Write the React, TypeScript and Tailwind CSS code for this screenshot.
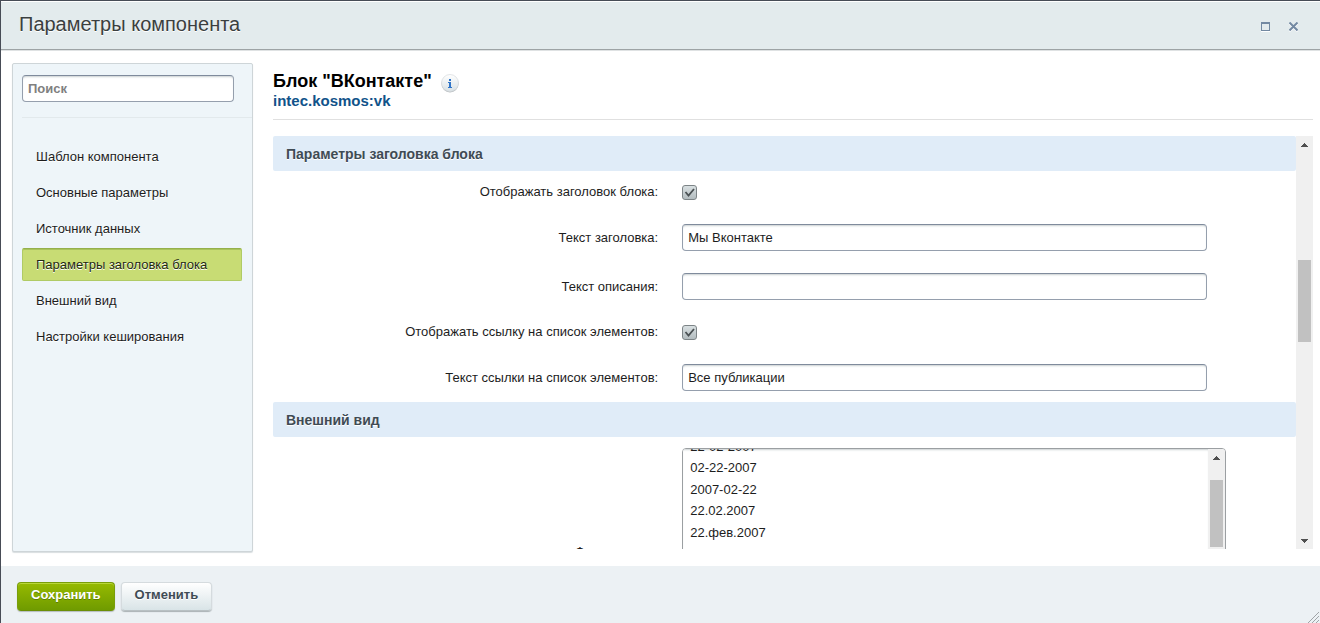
import React, { useEffect, useRef } from 'react';

const menu = [
  'Шаблон компонента',
  'Основные параметры',
  'Источник данных',
  'Параметры заголовка блока',
  'Внешний вид',
  'Настройки кеширования',
];

const dateFormats = [
  '22-02-2007',
  '02-22-2007',
  '2007-02-22',
  '22.02.2007',
  '22.фев.2007',
  '22 февраля 2007',
  'Февраль 22, 2007',
  '22/02/2007',
  '02/22/2007',
  '2007/02/22',
  '22 фев 2007',
  'Фев 22, 2007',
];

const inputClass =
  'h-[27px] rounded-[4px] border border-[#959fad] border-t-[#7f8b9c] bg-white text-[13px] text-[#1d1d1d] shadow-[inset_0_2px_2px_-1px_rgba(180,188,191,0.7)] outline-none';

const Arrow: React.FC<{ down?: boolean }> = ({ down }) => (
  <div className="flex h-[17px] shrink-0 items-center justify-center">
    <svg width="7" height="4" viewBox="0 0 7 4" fill="#505050" shapeRendering="crispEdges">
      {down ? (
        <path d="M0 0h7v1H6v1H5v1H4v1H3V3H2V2H1V1H0z" />
      ) : (
        <path d="M0 4h7V3H6V2H5V1H4V0H3v1H2v1H1v1H0z" />
      )}
    </svg>
  </div>
);

const SectionTitle: React.FC<{ children: React.ReactNode }> = ({ children }) => (
  <h2 className="flex h-[35px] items-center rounded-[2px] bg-[#e0ecf8] px-[13px] pt-[2px] text-[14px] font-bold text-[#3f4b54] [text-shadow:0_1px_#fff]">
    {children}
  </h2>
);

const TextRow: React.FC<{ id: string; label: string; value: string }> = ({ id, label, value }) => (
  <div className="flex h-[49px] items-center">
    <label htmlFor={id} className="w-2/5 shrink-0 pr-6 text-right">{label}</label>
    <input id={id} type="text" defaultValue={value} className={`${inputClass} w-[525px] max-w-full px-[5px]`} />
  </div>
);

const CheckRow: React.FC<{ id: string; label: string }> = ({ id, label }) => (
  <div className="flex h-[42px] items-center">
    <label htmlFor={id} className="w-2/5 shrink-0 pr-6 text-right">{label}</label>
    <span className="grid">
      <input
        id={id}
        type="checkbox"
        defaultChecked
        className="peer col-start-1 row-start-1 size-[15px] appearance-none rounded-[3px] border border-[#7d8487] bg-linear-to-b from-[#d9e0e2] to-[#b3bcbf]"
      />
      <svg
        className="pointer-events-none invisible col-start-1 row-start-1 peer-checked:visible"
        width="15"
        height="15"
        viewBox="0 0 15 15"
        fill="none"
        stroke="#4a5053"
      >
        <path d="M3.5 7l3 3.5L12 4" strokeWidth="1.8" />
      </svg>
    </span>
  </div>
);

const DateFormatRow: React.FC = () => {
  const list = useRef<HTMLSelectElement>(null);

  useEffect(() => {
    if (list.current) list.current.scrollTop = 10;
  }, []);

  return (
    <div className="flex items-center py-[11px]">
      <label htmlFor="date-format" className="w-2/5 shrink-0 pr-6 text-right">Формат даты:</label>
      <div className="flex h-[208px] w-[544px] max-w-full overflow-hidden rounded-[4px] border border-[#9b9fa2] bg-white">
        <select
          id="date-format"
          ref={list}
          size={9}
          className="h-full min-w-0 flex-1 appearance-none overflow-y-scroll bg-white px-[5px] text-[13px] text-[#1d1d1d] shadow-[inset_0_2px_2px_-1px_rgba(180,188,191,0.7)] outline-none [scrollbar-width:none]"
        >
          {dateFormats.map((format) => (
            <option key={format} className="px-[2px] py-0 odd:h-[21px] even:h-[22px]">{format}</option>
          ))}
        </select>
        <div className="flex w-[17px] shrink-0 flex-col bg-[#f0f0f0]">
          <Arrow />
          <div className="mx-[2px] mt-[14px] h-[67px] bg-[#c1c1c1]" />
        </div>
      </div>
    </div>
  );
};

const App: React.FC = () => {
  return (
    <div className="flex h-screen flex-col border-t border-l border-[#474c56] bg-white font-['Liberation_Sans',Arial,sans-serif] text-[13px] text-[#1d1d1d]">
      <header className="flex h-[49px] shrink-0 items-center justify-between border-t border-b border-t-white border-b-[#9da3a5] bg-[#e3ebed] pr-[22px] pl-[18px] shadow-[0_1px_#dfe2e3]">
        <h1 className="pb-[4px] text-[20px] leading-[24px] text-[#3b3f40] [text-shadow:0_1px_#fff]">Параметры компонента</h1>
        <div className="flex items-center gap-[19px] pt-[2px]">
          <button type="button" aria-label="Развернуть">
            <svg width="9" height="10" viewBox="0 0 9 10" shapeRendering="crispEdges">
              <path d="M0 9h9v1H0z" fill="#fff" />
              <path d="M0 0h9v9H0zM1 2v6h7V2z" fill="#7389a2" fillRule="evenodd" />
            </svg>
          </button>
          <button type="button" aria-label="Закрыть">
            <svg width="9" height="10" viewBox="0 0 9 10" fill="none" strokeWidth="2">
              <path d="M0.5 1.5l8 8M8.5 1.5l-8 8" stroke="#fff" />
              <path d="M0.5 0.5l8 8M8.5 0.5l-8 8" stroke="#7389a2" />
            </svg>
          </button>
        </div>
      </header>

      <div className="flex min-h-0 flex-1 gap-5 pt-[13px] pr-[7px] pb-[14px] pl-[11px]">
        <aside className="w-[241px] shrink-0 rounded-[2px] border border-[#ced5d8] bg-[#eef5f9] shadow-[0_1px_1px_#d9dee0]">
          <div className="ml-[9px] border-b border-[#e2e9ec] pt-[11px] pb-[15px]">
            <input
              type="text"
              placeholder="Поиск"
              aria-label="Поиск"
              className={`${inputClass} block w-[212px] px-[5px] font-bold placeholder:text-[#808080]`}
            />
          </div>
          <nav className="flex flex-col gap-[3px] pt-[22px] pr-[10px] pl-[9px]">
            {menu.map((item, idx) => (
              <a
                key={item}
                href="#"
                className={
                  idx === 3
                    ? 'flex h-[33px] items-center rounded-[2px] border border-[#b0cb65] border-t-[#95b04b] bg-[#c8dc74] px-[13px] text-[#1f2a10] shadow-[inset_0_1px_#a9c35c] [text-shadow:0_1px_#fff]'
                    : 'flex h-[33px] items-center border border-transparent px-[13px] text-[#1d1d1d] [text-shadow:0_1px_#fff]'
                }
              >
                {item}
              </a>
            ))}
          </nav>
        </aside>

        <main className="flex min-w-0 flex-1 flex-col pb-[3px]">
          <div className="h-[57px] shrink-0 border-b border-[#e0e0e0] pt-[6px]">
            <div className="flex items-center gap-[9px]">
              <h2 className="text-[18px] leading-[22px] font-bold text-black">Блок "ВКонтакте"</h2>
              <button type="button" aria-label="Справка" className="pt-[5px]">
                <svg width="18" height="19" viewBox="0 0 18 19">
                  <defs>
                    <linearGradient id="info" x1="0" y1="0" x2="0" y2="1">
                      <stop offset="0" stopColor="#fff" />
                      <stop offset="1" stopColor="#d8e1e5" />
                    </linearGradient>
                  </defs>
                  <circle cx="9" cy="10" r="8.5" fill="#b5babd" />
                  <circle cx="9" cy="9" r="8.5" fill="url(#info)" stroke="#d5dadd" strokeWidth="0.7" />
                  <path d="M8 5h2v2H8zM7 8h3v5h1v1H7v-1h1V9H7z" fill="#2f74c8" />
                </svg>
              </button>
            </div>
            <a href="#" className="block text-[15px] leading-[16px] font-bold text-[#11538a]">intec.kosmos:vk</a>
          </div>

          <div className="mt-4 flex min-h-0 flex-1">
            <div className="min-w-0 flex-1 overflow-hidden">
              <SectionTitle>Параметры заголовка блока</SectionTitle>
              <CheckRow id="show-title" label="Отображать заголовок блока:" />
              <TextRow id="title-text" label="Текст заголовка:" value="Мы Вконтакте" />
              <TextRow id="description-text" label="Текст описания:" value="" />
              <CheckRow id="show-link" label="Отображать ссылку на список элементов:" />
              <TextRow id="link-text" label="Текст ссылки на список элементов:" value="Все публикации" />
              <SectionTitle>Внешний вид</SectionTitle>
              <DateFormatRow />
            </div>
            <div className="flex w-[17px] shrink-0 flex-col justify-between bg-[#f0f0f0]">
              <Arrow />
              <div className="flex-1 px-[2px] pt-[107px]">
                <div className="h-[82px] bg-[#c1c1c1]" />
              </div>
              <Arrow down />
            </div>
          </div>
        </main>
      </div>

      <footer className="flex h-[57px] shrink-0 items-start justify-between bg-[#ecf1f4] pl-4">
        <div className="flex gap-[6px] pt-4">
          <button
            type="button"
            className="h-[29px] rounded-[4px] border border-[#7a9e0a] border-b-[#6b8e06] bg-linear-to-b from-[#97ba00] to-[#6f9b00] px-[13px] pb-[3px] text-[13px] font-bold text-white shadow-[inset_0_1px_#b9d63a,0_1px_1px_#b5bcbf] [text-shadow:0_1px_rgba(70,100,0,0.6)]"
          >
            Сохранить
          </button>
          <button
            type="button"
            className="h-[29px] rounded-[4px] border border-[#d5dbde] border-b-[#b8c0c3] bg-linear-to-b from-white to-[#d9e4e7] px-[13px] pb-[3px] text-[13px] font-bold text-[#3f4b54] shadow-[0_1px_1px_#aab1b4] [text-shadow:0_1px_#fff]"
          >
            Отменить
          </button>
        </div>
        <svg className="self-end" width="12" height="11" viewBox="0 0 12 11" fill="none" stroke="#a0a4a7">
          <path d="M0 11L11 0M4 11l7-7M8 11l3-3" />
        </svg>
      </footer>
    </div>
  );
};

export default App;
